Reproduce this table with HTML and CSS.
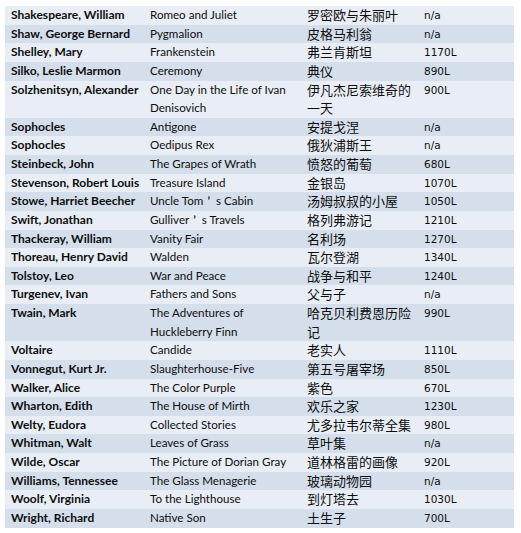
FILE: index.html
```html
<!DOCTYPE html>
<html lang="zh">
<head>
<meta charset="utf-8">
<link rel="stylesheet" href="styles.css">
</head>
<body>
<table class="books">
<colgroup><col class="c-author"><col class="c-title"><col class="c-zh"><col class="c-lex"></colgroup>
<tbody>
<tr><td class="author">Shakespeare, William</td><td class="title">Romeo and Juliet</td><td class="zh">罗密欧与朱丽叶</td><td class="lex">n/a</td></tr>
<tr><td class="author">Shaw, George Bernard</td><td class="title">Pygmalion</td><td class="zh">皮格马利翁</td><td class="lex">n/a</td></tr>
<tr><td class="author">Shelley, Mary</td><td class="title">Frankenstein</td><td class="zh">弗兰肯斯坦</td><td class="lex">1170L</td></tr>
<tr><td class="author">Silko, Leslie Marmon</td><td class="title">Ceremony</td><td class="zh">典仪</td><td class="lex">890L</td></tr>
<tr><td class="author">Solzhenitsyn, Alexander</td><td class="title">One Day in the Life of Ivan<br>Denisovich</td><td class="zh">伊凡杰尼索维奇的<br>一天</td><td class="lex">900L</td></tr>
<tr><td class="author">Sophocles</td><td class="title">Antigone</td><td class="zh">安提戈涅</td><td class="lex">n/a</td></tr>
<tr><td class="author">Sophocles</td><td class="title">Oedipus Rex</td><td class="zh">俄狄浦斯王</td><td class="lex">n/a</td></tr>
<tr><td class="author">Steinbeck, John</td><td class="title">The Grapes of Wrath</td><td class="zh">愤怒的葡萄</td><td class="lex">680L</td></tr>
<tr><td class="author">Stevenson, Robert Louis</td><td class="title">Treasure Island</td><td class="zh">金银岛</td><td class="lex">1070L</td></tr>
<tr><td class="author">Stowe, Harriet Beecher</td><td class="title">Uncle Tom<span class="fw">’</span>s Cabin</td><td class="zh">汤姆叔叔的小屋</td><td class="lex">1050L</td></tr>
<tr><td class="author">Swift, Jonathan</td><td class="title">Gulliver<span class="fw">’</span>s Travels</td><td class="zh">格列弗游记</td><td class="lex">1210L</td></tr>
<tr><td class="author">Thackeray, William</td><td class="title">Vanity Fair</td><td class="zh">名利场</td><td class="lex">1270L</td></tr>
<tr><td class="author">Thoreau, Henry David</td><td class="title">Walden</td><td class="zh">瓦尔登湖</td><td class="lex">1340L</td></tr>
<tr><td class="author">Tolstoy, Leo</td><td class="title">War and Peace</td><td class="zh">战争与和平</td><td class="lex">1240L</td></tr>
<tr><td class="author">Turgenev, Ivan</td><td class="title">Fathers and Sons</td><td class="zh">父与子</td><td class="lex">n/a</td></tr>
<tr><td class="author">Twain, Mark</td><td class="title">The Adventures of<br>Huckleberry Finn</td><td class="zh">哈克贝利费恩历险<br>记</td><td class="lex">990L</td></tr>
<tr><td class="author">Voltaire</td><td class="title">Candide</td><td class="zh">老实人</td><td class="lex">1110L</td></tr>
<tr><td class="author">Vonnegut, Kurt Jr.</td><td class="title">Slaughterhouse-Five</td><td class="zh">第五号屠宰场</td><td class="lex">850L</td></tr>
<tr><td class="author">Walker, Alice</td><td class="title">The Color Purple</td><td class="zh">紫色</td><td class="lex">670L</td></tr>
<tr><td class="author">Wharton, Edith</td><td class="title">The House of Mirth</td><td class="zh">欢乐之家</td><td class="lex">1230L</td></tr>
<tr><td class="author">Welty, Eudora</td><td class="title">Collected Stories</td><td class="zh">尤多拉韦尔蒂全集</td><td class="lex">980L</td></tr>
<tr><td class="author">Whitman, Walt</td><td class="title">Leaves of Grass</td><td class="zh">草叶集</td><td class="lex">n/a</td></tr>
<tr><td class="author">Wilde, Oscar</td><td class="title">The Picture of Dorian Gray</td><td class="zh">道林格雷的画像</td><td class="lex">920L</td></tr>
<tr><td class="author">Williams, Tennessee</td><td class="title">The Glass Menagerie</td><td class="zh">玻璃动物园</td><td class="lex">n/a</td></tr>
<tr><td class="author">Woolf, Virginia</td><td class="title">To the Lighthouse</td><td class="zh">到灯塔去</td><td class="lex">1030L</td></tr>
<tr><td class="author">Wright, Richard</td><td class="title">Native Son</td><td class="zh">土生子</td><td class="lex">700L</td></tr>
</tbody>
</table>
</body>
</html>
```

FILE: styles.css
```css
html, body {
  margin: 0;
  padding: 0;
  background: #ffffff;
}
body {
  padding: 6px 0 0 5px;
}
.books {
  border-collapse: collapse;
  table-layout: fixed;
  width: 509px;
  color: #0d0d0d;
}
.c-author { width: 139px; }
.c-title { width: 157px; }
.c-zh { width: 117px; }
.c-lex { width: 96px; }
.books td {
  padding: 0 0 0 6px;
  vertical-align: top;
  line-height: 18.63px;
  white-space: nowrap;
  overflow: hidden;
}
.books tr:nth-child(odd) { background: #e9eef6; }
.books tr:nth-child(even) { background: #d5dfec; }
.author {
  font-family: Lato, "Noto Sans", sans-serif;
  font-weight: 700;
  font-size: 12px;
}
.title {
  font-family: Lato, "Noto Sans", sans-serif;
  font-size: 11.6px;
}
.fw {
  font-weight: 700;
  padding: 0 6px 0 4px;
}
.zh {
  font-family: "Noto Sans CJK SC", sans-serif;
  font-size: 13px;
}
.lex {
  font-family: "DejaVu Sans", sans-serif;
  font-size: 10.5px;
}
```
